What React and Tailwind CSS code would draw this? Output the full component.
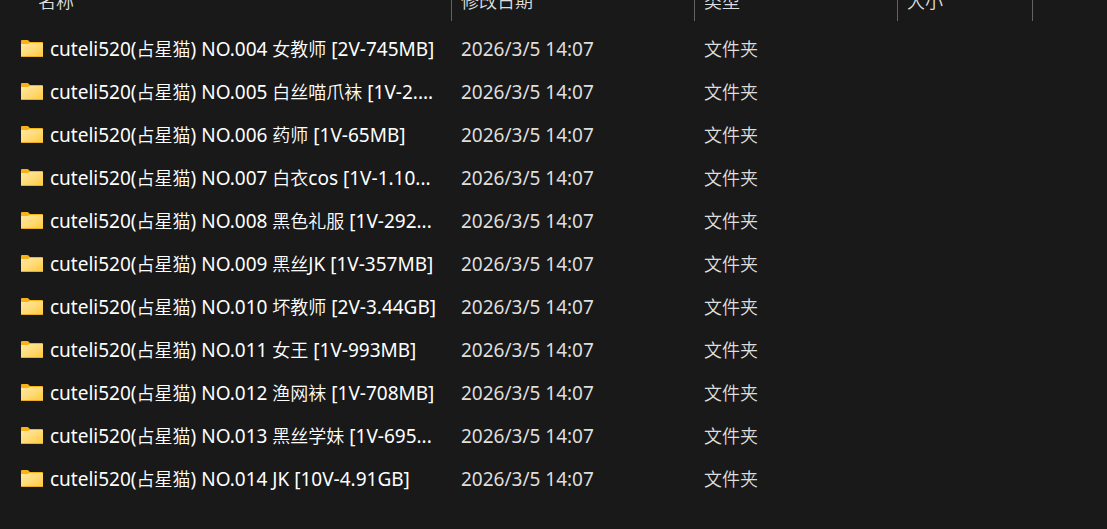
import React from 'react';

const files = [
  'cuteli520(占星猫) NO.004 女教师 [2V-745MB]',
  'cuteli520(占星猫) NO.005 白丝喵爪袜 [1V-2....',
  'cuteli520(占星猫) NO.006 药师 [1V-65MB]',
  'cuteli520(占星猫) NO.007 白衣cos [1V-1.10...',
  'cuteli520(占星猫) NO.008 黑色礼服 [1V-292...',
  'cuteli520(占星猫) NO.009 黑丝JK [1V-357MB]',
  'cuteli520(占星猫) NO.010 坏教师 [2V-3.44GB]',
  'cuteli520(占星猫) NO.011 女王 [1V-993MB]',
  'cuteli520(占星猫) NO.012 渔网袜 [1V-708MB]',
  'cuteli520(占星猫) NO.013 黑丝学妹 [1V-695...',
  'cuteli520(占星猫) NO.014 JK [10V-4.91GB]',
];

// Chinese runs are set smaller and lighter than the latin text around them
const MixedText = ({ children }) =>
  children.split(/([\u4e00-\u9fff]+)/).map((part, i) =>
    i % 2 ? (
      <span key={i} className="text-[18px] font-[350]">
        {part}
      </span>
    ) : (
      part
    )
  );

const FolderIcon = () => (
  <svg viewBox="0 0 22 18" className="h-[18px] w-[22px] shrink-0" aria-hidden="true">
    <defs>
      <linearGradient id="folder-front" x1="0" y1="0" x2="1" y2="1">
        <stop offset="0" stopColor="#ffe8a0" />
        <stop offset="0.5" stopColor="#ffdb78" />
        <stop offset="1" stopColor="#ffc937" />
      </linearGradient>
    </defs>
    <path d="M0 1Q0 0 1 0H6.4Q7 0 7.5 0.6L8.9 2H21Q22 2 22 3V10H0Z" fill="#f8b117" />
    <path d="M0 4H6.6Q7.4 4 8 3.6L8.6 3H22V16Q22 17 21 17H1Q0 17 0 16Z" fill="url(#folder-front)" />
    <path d="M0 16H22Q22 17 21 17H1Q0 17 0 16Z" fill="#e9ac2b" />
  </svg>
);

const HeaderCell = ({ label, className }) => (
  <th scope="col" className="p-0 pb-[6px] text-left font-[350]">
    <div className={`flex h-[39px] items-center border-r border-[#636363] text-[18px] ${className}`}>
      {label}
    </div>
  </th>
);

const App = () => {
  return (
    <div className="min-h-screen overflow-hidden bg-[#191919] font-['Noto_Sans','Noto_Sans_CJK_SC',sans-serif] text-[#dedede]">
      {/* the list is scrolled, so the header row is partly out of view */}
      <table className="-mt-[18px] w-full table-fixed border-collapse">
        <colgroup>
          <col className="w-[452px]" />
          <col className="w-[243px]" />
          <col className="w-[203px]" />
          <col className="w-[135px]" />
          <col />
        </colgroup>
        <thead>
          <tr>
            <HeaderCell label="名称" className="pl-[38px]" />
            <HeaderCell label="修改日期" className="pl-[9px]" />
            <HeaderCell label="类型" className="pl-[9px]" />
            <HeaderCell label="大小" className="pl-[9px]" />
            <td />
          </tr>
        </thead>
        <tbody>
          {files.map((name) => (
            <tr key={name} className="h-[43px] text-[19px] leading-6 whitespace-nowrap">
              <td className="p-0 pl-[21px]">
                <div className="flex items-center gap-[7px]">
                  <FolderIcon />
                  <span className="text-white">
                    <MixedText>{name}</MixedText>
                  </span>
                </div>
              </td>
              <td className="p-0 pl-[9px]">2026/3/5 14:07</td>
              <td className="p-0 pl-[9px] text-[18px] font-[350]">文件夹</td>
              <td className="p-0" />
              <td className="p-0" />
            </tr>
          ))}
        </tbody>
      </table>
    </div>
  );
};

export default App;
